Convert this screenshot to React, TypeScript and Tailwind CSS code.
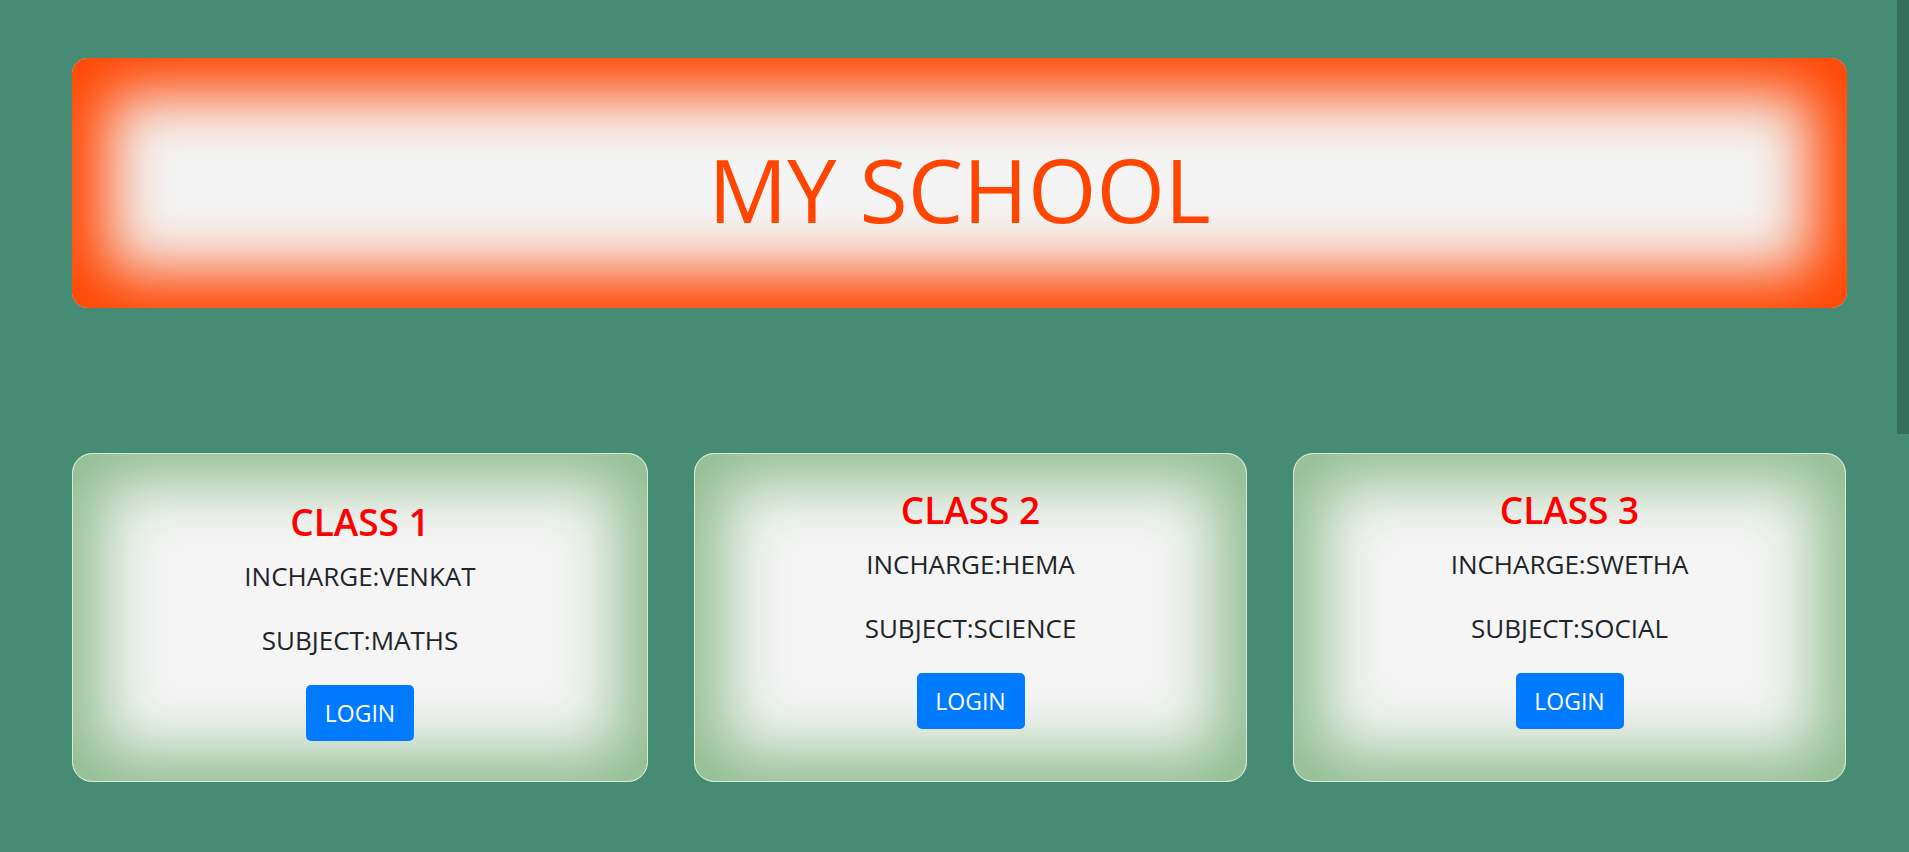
import React from 'react';

interface ClassInfo {
  title: string;
  incharge: string;
  subject: string;
}

const classes: ClassInfo[] = [
  { title: 'CLASS 1', incharge: 'VENKAT', subject: 'MATHS' },
  { title: 'CLASS 2', incharge: 'HEMA', subject: 'SCIENCE' },
  { title: 'CLASS 3', incharge: 'SWETHA', subject: 'SOCIAL' },
];

const ClassCard: React.FC<{ info: ClassInfo; first?: boolean }> = ({ info, first }) => (
  <div
    className={`h-[329px] rounded-[20px] border border-[#d9e6dc] bg-[#f5f5f5] shadow-[inset_0_0_64px_28px_#8fbc8f] flex flex-col items-center ${
      first ? 'pt-[46px]' : 'pt-[34px]'
    }`}
  >
    <h2 className="text-[37px] leading-[44px] font-semibold text-[#ff0000]">{info.title}</h2>
    <p className="mt-[13px] text-[26px] leading-[39px] text-[#212529]">INCHARGE:{info.incharge}</p>
    <p className="mt-[25px] text-[26px] leading-[39px] text-[#212529]">SUBJECT:{info.subject}</p>
    <button className="mt-[25px] w-[108px] h-[56px] rounded-[5px] bg-[#007bff] text-white text-[23px]">
      LOGIN
    </button>
  </div>
);

export default function App() {
  return (
    <div className="h-screen overflow-hidden flex bg-[#468b74] font-['Open_Sans',sans-serif]">
      <main className="flex-1 pl-[72px] pr-[50px] pt-[58px]">
        <header className="h-[250px] rounded-[16px] bg-[#f4f4f4] shadow-[inset_0_0_60px_36px_#ff4500] flex items-center justify-center pt-[12px]">
          <h1 className="text-[88px] leading-none text-[#ff4500]">MY SCHOOL</h1>
        </header>

        <div className="mt-[145px] grid grid-cols-[576px_553px_553px] gap-[46px]">
          {classes.map((c, i) => (
            <ClassCard key={c.title} info={c} first={i === 0} />
          ))}
        </div>
      </main>

      {/* page scrollbar */}
      <aside className="w-[12px]">
        <div className="h-[434px] bg-[#356e5a]" />
      </aside>
    </div>
  );
}
